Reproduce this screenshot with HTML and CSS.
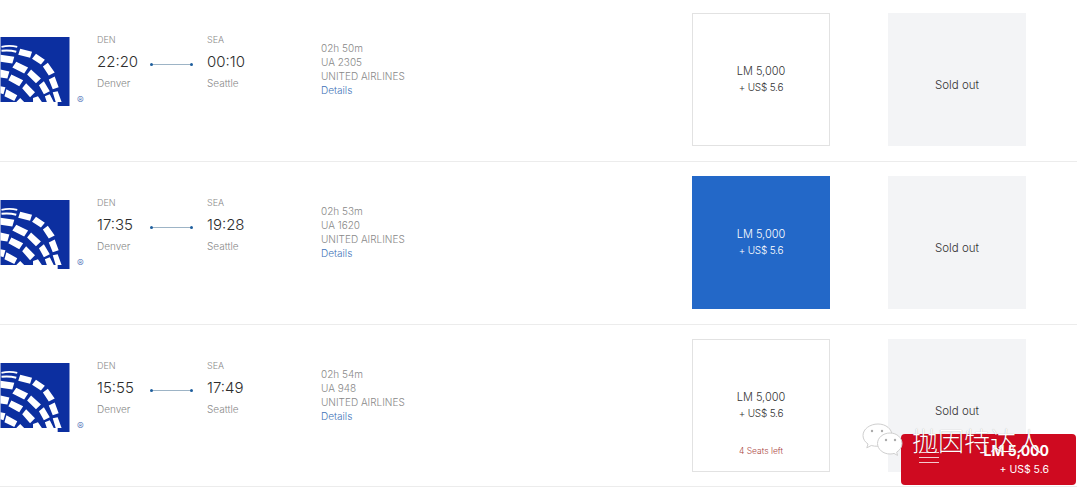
FILE: index.html
```html
<!DOCTYPE html>
<html lang="en">
<head>
    <meta charset="UTF-8">
    <meta name="viewport" content="width=device-width, initial-scale=1.0">
    <title>Flight results</title>
    <link rel="stylesheet" href="styles.css">
</head>
<body>

    <svg class="defs" width="0" height="0">
        <symbol id="globe" viewBox="0 0 70 70">
            <path d="M0 0H70V70H58V66H0Z" fill="#0c2fa0"/>
            <!-- outer band -->
            <path fill="#fff" d="M20 12L32 15L30 21L18 18ZM36 17L45 23L41 28L32 22ZM48 26L55 36L49 39L43 30ZM55 40L59 51L53 53L49 43ZM58 55L62 66H56L53 56Z"/>
            <!-- second band -->
            <path fill="#fff" d="M0 18L14 20L12 27L0 25ZM16 25L28 31L24 37L12 31ZM31 33L41 42L36 47L27 38ZM44 45L50 55L44 58L39 49ZM50 58L54 66H47L45 60Z"/>
            <!-- third band -->
            <path fill="#fff" d="M0 33L9 35L7 42L0 41ZM11 38L23 44L19 50L8 44ZM26 47L35 56L30 61L22 52ZM38 60L42 66H33V62Z"/>
            <!-- fourth band -->
            <path fill="#fff" d="M0 50L5 51L3 58L0 57ZM6 53L17 59L14 65L4 60ZM20 62L24 66H16Z"/>
            <path d="M1 10Q9 8 17 10M1 14Q9 13 16 15" fill="none" stroke="#fff" stroke-width="2"/>
        </symbol>
    </svg>

    <div class="results">

        <!-- DEN to SEA, 22:20 -->
        <div class="flight">
            <div class="carrier">
                <svg class="logo"><use href="#globe"/></svg>
                <span class="reg">®</span>
            </div>
            <div class="stop">
                <div class="code">DEN</div>
                <div class="time">22:20</div>
                <div class="city">Denver</div>
            </div>
            <div class="leg"></div>
            <div class="stop">
                <div class="code">SEA</div>
                <div class="time">00:10</div>
                <div class="city">Seattle</div>
            </div>
            <div class="info">
                <div>02h 50m</div>
                <div>UA 2305</div>
                <div>UNITED AIRLINES</div>
                <a class="details">Details</a>
            </div>
            <div class="fares">
                <div class="fare">
                    <div class="miles">LM 5,000</div>
                    <div class="cash">+ US$ 5.6</div>
                </div>
                <div class="fare sold">Sold out</div>
            </div>
        </div>

        <!-- DEN to SEA, 17:35 -->
        <div class="flight">
            <div class="carrier">
                <svg class="logo"><use href="#globe"/></svg>
                <span class="reg">®</span>
            </div>
            <div class="stop">
                <div class="code">DEN</div>
                <div class="time">17:35</div>
                <div class="city">Denver</div>
            </div>
            <div class="leg"></div>
            <div class="stop">
                <div class="code">SEA</div>
                <div class="time">19:28</div>
                <div class="city">Seattle</div>
            </div>
            <div class="info">
                <div>02h 53m</div>
                <div>UA 1620</div>
                <div>UNITED AIRLINES</div>
                <a class="details">Details</a>
            </div>
            <div class="fares">
                <div class="fare selected">
                    <div class="miles">LM 5,000</div>
                    <div class="cash">+ US$ 5.6</div>
                </div>
                <div class="fare sold">Sold out</div>
            </div>
        </div>

        <!-- DEN to SEA, 15:55 -->
        <div class="flight">
            <div class="carrier">
                <svg class="logo"><use href="#globe"/></svg>
                <span class="reg">®</span>
            </div>
            <div class="stop">
                <div class="code">DEN</div>
                <div class="time">15:55</div>
                <div class="city">Denver</div>
            </div>
            <div class="leg"></div>
            <div class="stop">
                <div class="code">SEA</div>
                <div class="time">17:49</div>
                <div class="city">Seattle</div>
            </div>
            <div class="info">
                <div>02h 54m</div>
                <div>UA 948</div>
                <div>UNITED AIRLINES</div>
                <a class="details">Details</a>
            </div>
            <div class="fares">
                <div class="fare">
                    <div class="miles">LM 5,000</div>
                    <div class="cash">+ US$ 5.6</div>
                    <div class="seats">4 Seats left</div>
                </div>
                <div class="fare sold">Sold out</div>
            </div>
        </div>
    </div>

    <!-- Floating total button -->
    <div class="total">
        <div class="menu-lines"><span></span><span></span><span></span></div>
        <div class="total-price">
            <div class="total-miles">LM 5,000</div>
            <div class="total-cash">+ US$ 5.6</div>
        </div>
    </div>

    <!-- Watermark over the corner -->
    <div class="watermark">
        <svg class="wechat" viewBox="0 0 42 33" width="42" height="33">
            <path d="M16 1C8 1 1 6 1 12.500c0 3.500 2 6.500 5 8.500l-1.200 3.800 4.500-2.300c2 .6 4.500 .9 6.700 .7 5 0 14-5 14-10.700C30 6 24 1 16 1z" fill="#fff" stroke="#cfcfcf" stroke-width="1"/>
            <path d="M28 10c-7 0-12.500 4.800-12.500 10.500S21 31 28 31c1.500 0 2.800-.2 4-.6l3.500 2-.8-3.300c3.300-2 5.300-5 5.300-8.600C40 14.800 35 10 28 10z" fill="#fff" stroke="#cfcfcf" stroke-width="1"/>
            <circle cx="10" cy="8" r="1.200" fill="#aaa"/>
            <circle cx="20" cy="8" r="1.200" fill="#aaa"/>
            <circle cx="24" cy="17" r="1.200" fill="#aaa"/>
            <circle cx="33" cy="17" r="1.200" fill="#aaa"/>
        </svg>
        <span class="watermark-text">抛因特达人</span>
    </div>

</body>
</html>
```

FILE: styles.css
```css
/* Global styling */
body {
    font-family: Inter, "Liberation Sans", sans-serif;
    font-weight: 300;
    background-color: #fff;
    color: #333;
    margin: 0;
    height: 487px;
    overflow: hidden;
    position: relative;
}

.defs {
    display: block;
    height: 0;
}

.results {
    width: 1077px;
    margin-top: -1px;
}

/* One flight row */
.flight {
    display: flex;
    align-items: flex-start;
    box-sizing: border-box;
    height: 163px;
    padding-top: 14px;
    border-bottom: 1px solid #ececec;
}

.flight:last-child {
    height: 162px;
}

/* Carrier logo */
.carrier {
    display: flex;
    align-items: flex-end;
    width: 97px;
    flex-shrink: 0;
    margin-top: 24px;
    height: 69px;
}

.logo {
    width: 70px;
    height: 69px;
}

.reg {
    font-size: 10px;
    line-height: 12px;
    color: #3a5fb0;
    margin-left: 7px;
}

/* Departure and arrival */
.stop {
    width: 60px;
    margin-top: 21px;
}

.code {
    font-size: 9px;
    line-height: 11px;
    color: #888;
}

.time {
    font-size: 15px;
    line-height: 20px;
    margin-top: 7px;
    color: #2d2d2d;
}

.city {
    font-size: 10px;
    line-height: 14px;
    margin-top: 4px;
    color: #888;
}

/* Line between the two stops */
.leg {
    position: relative;
    width: 41px;
    height: 1px;
    margin: 51px 15px 0 -6px;
    background-color: #9db4c6;
}

.leg::before,
.leg::after {
    content: "";
    position: absolute;
    top: -1px;
    width: 3px;
    height: 3px;
    border-radius: 50%;
    background-color: #1f5f9e;
}

.leg::before {
    left: -1px;
}

.leg::after {
    right: -1px;
}

/* Duration, flight number, airline */
.info {
    margin-left: 54px;
    margin-top: 28px;
    font-size: 10px;
    line-height: 14px;
    color: #888;
}

.details {
    color: #3f74b8;
}

/* Fare boxes */
.fares {
    display: flex;
    gap: 58px;
    margin-left: auto;
    padding-right: 51px;
}

.fare {
    position: relative;
    display: flex;
    flex-direction: column;
    align-items: center;
    justify-content: center;
    box-sizing: border-box;
    width: 138px;
    height: 133px;
    padding-bottom: 2px;
    border: 1px solid #e2e2e2;
    text-align: center;
}

.miles {
    font-size: 11px;
    line-height: 16px;
}

.cash {
    font-size: 10px;
    line-height: 16px;
    letter-spacing: -0.2px;
}

.selected {
    background-color: #2368c8;
    border-color: #2368c8;
    color: #fff;
}

.sold {
    background-color: #f3f4f6;
    border-color: #f3f4f6;
    font-size: 11.500px;
    padding: 10px 0 0;
}

.seats {
    position: absolute;
    left: 0;
    right: 0;
    bottom: 14px;
    font-size: 8.500px;
    line-height: 12px;
    color: #a94442;
}

/* Floating total button */
.total {
    position: absolute;
    left: 901px;
    top: 434px;
    width: 175px;
    height: 51px;
    display: flex;
    align-items: center;
    justify-content: space-between;
    box-sizing: border-box;
    padding: 0 27px 0 18px;
    background-color: #cf0a20;
    border-radius: 4px;
    color: #fff;
}

.menu-lines span {
    display: block;
    width: 20px;
    height: 1px;
    margin-bottom: 4px;
    background-color: #f5c9ce;
}

.total-price {
    text-align: right;
}

.total-miles {
    font-size: 14px;
    line-height: 18px;
    font-weight: 700;
}

.total-cash {
    font-size: 10.500px;
    line-height: 16px;
    font-weight: 400;
    margin-top: 2px;
}

/* Watermark */
.watermark {
    position: absolute;
    left: 862px;
    top: 423px;
    display: flex;
    align-items: center;
    gap: 8px;
}

.watermark-text {
    font-family: "Noto Sans CJK SC", sans-serif;
    font-weight: 300;
    font-size: 26px;
    line-height: 32px;
    color: #fff;
    text-shadow: 0 0 1px rgba(0, 0, 0, 0.35);
}
```
